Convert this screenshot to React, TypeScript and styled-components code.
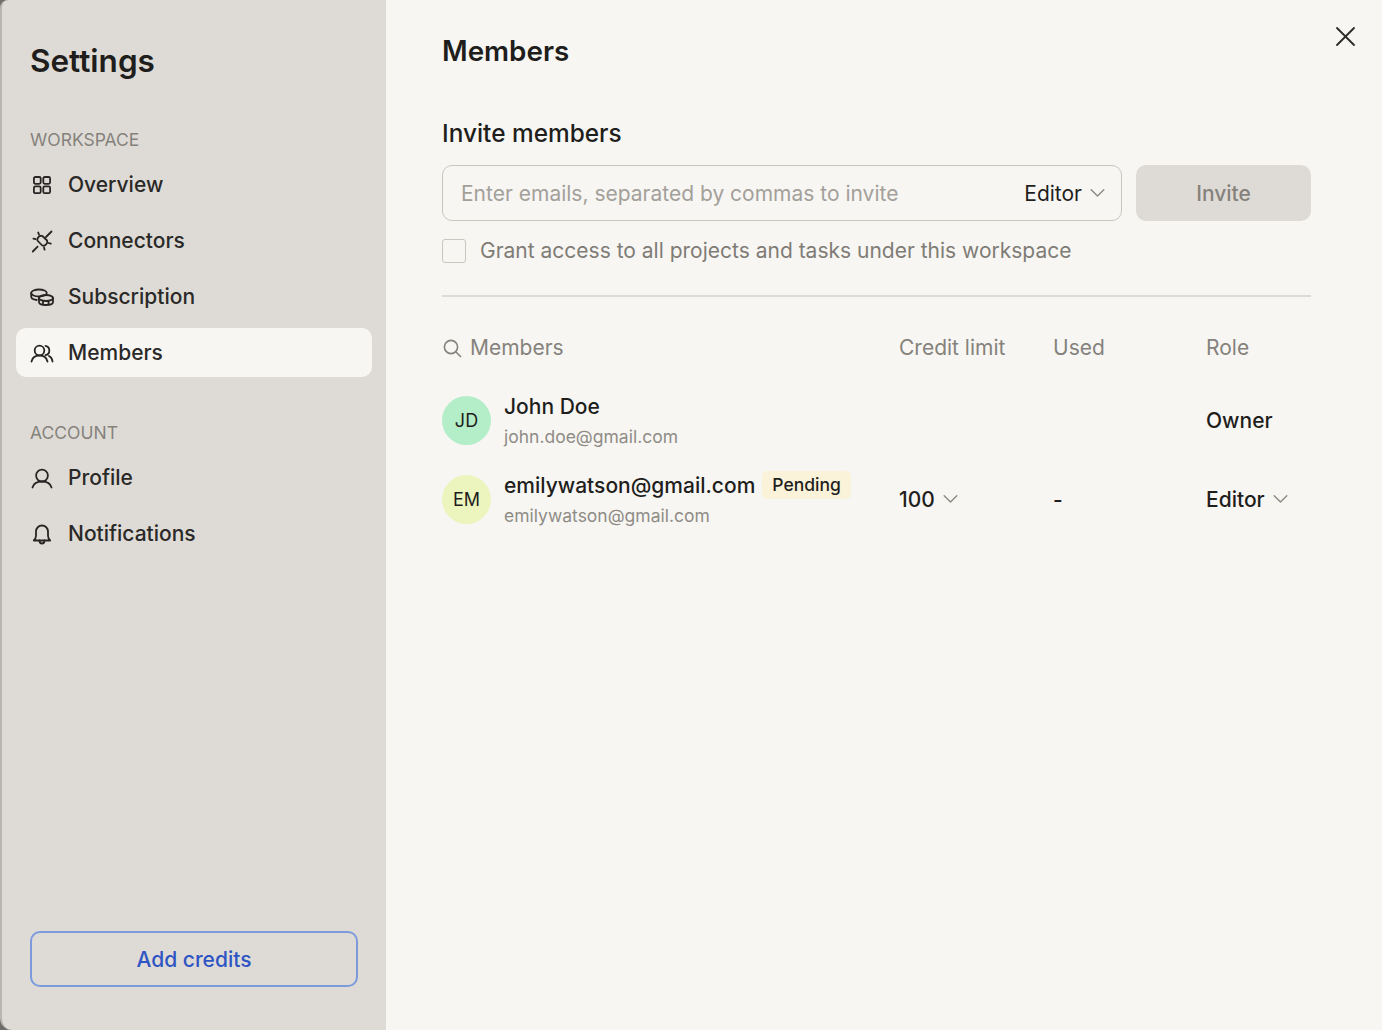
import React from "react";
import styled, { createGlobalStyle } from "styled-components";

const GlobalStyle = createGlobalStyle`
  html, body {
    margin: 0;
    padding: 0;
    background: #f7f6f3;
  }
  body {
    font-family: "Inter", "Liberation Sans", sans-serif;
    color: #1f1e1c;
  }
  * {
    box-sizing: border-box;
  }
`;

const Page = styled.div`
  display: flex;
  width: 1382px;
  height: 1030px;
  overflow: hidden;
  background: #6f6d69;
`;

const Sidebar = styled.aside`
  display: flex;
  flex-direction: column;
  width: 386px;
  height: 1030px;
  padding: 0 14px 43px 14px;
  background: #dedbd6;
  border-left: 2px solid #b9b6b1;
  border-radius: 8px 0 0 12px;
`;

const SidebarTitle = styled.h1`
  margin: 42px 0 0 14px;
  font-size: 31.5px;
  line-height: 38px;
  font-weight: 600;
  color: #1f1e1c;
`;

const SectionLabel = styled.div<{ $top: number }>`
  margin: ${(p) => p.$top}px 0 0 14px;
  font-size: 17.5px;
  line-height: 22px;
  color: #85827c;
`;

const NavList = styled.nav`
  display: flex;
  flex-direction: column;
  gap: 7px;
  margin-top: 9px;
`;

const NavItem = styled.a<{ $active?: boolean }>`
  display: flex;
  align-items: center;
  gap: 14px;
  height: 49px;
  padding: 0 14px;
  border-radius: 10px;
  font-size: 21px;
  font-weight: 500;
  color: #2a2927;
  background: ${(p) => (p.$active ? "#f7f6f3" : "transparent")};
  svg {
    flex: none;
    width: 24px;
    height: 24px;
    fill: none;
    stroke: #262523;
    stroke-width: 1.8;
    stroke-linecap: round;
    stroke-linejoin: round;
  }
`;

const AddCredits = styled.button`
  width: 328px;
  height: 56px;
  margin: auto 0 0 14px;
  border: 2px solid #7b9bdc;
  border-radius: 10px;
  background: transparent;
  font-family: inherit;
  font-size: 21px;
  font-weight: 500;
  color: #2f55c4;
`;

const Main = styled.main`
  position: relative;
  flex: 1;
  height: 1030px;
  padding: 33px 71px 0 56px;
  background: #f7f6f3;
`;

const CloseIcon = styled.svg`
  position: absolute;
  top: 26px;
  right: 26px;
  width: 21px;
  height: 21px;
  fill: none;
  stroke: #2a2927;
  stroke-width: 1.8;
  stroke-linecap: round;
`;

const PageTitle = styled.h2`
  margin: 0;
  font-size: 27.8px;
  line-height: 36px;
  font-weight: 600;
  color: #1f1e1c;
`;

const SectionTitle = styled.h3`
  margin: 47px 0 0;
  font-size: 24.4px;
  line-height: 34px;
  font-weight: 500;
  color: #1f1e1c;
`;

const InviteRow = styled.div`
  display: flex;
  gap: 14px;
  margin-top: 15px;
`;

const InviteField = styled.div`
  display: flex;
  align-items: center;
  justify-content: space-between;
  width: 680px;
  height: 56px;
  padding: 0 16px 0 18px;
  border: 1.5px solid #c9c6c0;
  border-radius: 10px;
`;

const Placeholder = styled.span`
  font-size: 21px;
  color: #a3a09a;
`;

const Selector = styled.span`
  display: inline-flex;
  align-items: center;
  gap: 8px;
  font-size: 21px;
  color: #1f1e1c;
`;

const Chevron = styled.svg`
  width: 15px;
  height: 10px;
  fill: none;
  stroke: #8f8c86;
  stroke-width: 1.5;
  stroke-linecap: round;
  stroke-linejoin: round;
`;

const InviteButton = styled.button`
  width: 175px;
  height: 56px;
  border: 0;
  border-radius: 10px;
  background: #dedbd6;
  font-family: inherit;
  font-size: 21px;
  font-weight: 500;
  color: #85827c;
`;

const GrantRow = styled.label`
  display: flex;
  align-items: center;
  gap: 14px;
  margin-top: 17px;
  font-size: 21px;
  line-height: 26px;
  color: #7f7c76;
`;

const Checkbox = styled.span`
  width: 24px;
  height: 24px;
  border: 1.5px solid #c9c6c0;
  border-radius: 3px;
`;

const Divider = styled.hr`
  height: 2px;
  margin: 31px 0 0;
  border: 0;
  background: #dedbd6;
`;

const columns = "457px 154px 153px 1fr";

const HeaderRow = styled.div`
  display: grid;
  grid-template-columns: ${columns};
  align-items: center;
  margin-top: 38px;
  font-size: 21px;
  line-height: 26px;
  color: #85827c;
`;

const SearchCell = styled.div`
  display: flex;
  align-items: center;
  gap: 8px;
  svg {
    width: 20px;
    height: 20px;
    fill: none;
    stroke: #85827c;
    stroke-width: 1.6;
    stroke-linecap: round;
  }
`;

const MemberRow = styled.div<{ $top: number }>`
  display: grid;
  grid-template-columns: ${columns};
  align-items: center;
  margin-top: ${(p) => p.$top}px;
  font-size: 21px;
  font-weight: 450;
  color: #1f1e1c;
`;

const MemberCell = styled.div`
  display: flex;
  align-items: center;
  gap: 13px;
`;

const Avatar = styled.div<{ $bg: string }>`
  display: flex;
  align-items: center;
  justify-content: center;
  flex: none;
  width: 49px;
  height: 49px;
  border-radius: 50%;
  background: ${(p) => p.$bg};
  font-size: 18px;
  font-weight: 400;
  color: #1f1e1c;
`;

const MemberText = styled.div`
  display: flex;
  flex-direction: column;
  gap: 4px;
`;

const NameLine = styled.div`
  display: flex;
  align-items: center;
  gap: 7px;
  height: 30px;
  font-size: 21px;
  font-weight: 450;
`;

const Email = styled.div`
  font-size: 17.5px;
  font-weight: 400;
  line-height: 24px;
  color: #8f8c86;
`;

const Badge = styled.span`
  padding: 2px 10px;
  border-radius: 5px;
  background: #faf3d9;
  font-size: 17.5px;
  line-height: 24px;
  color: #1f1e1c;
`;

const Icon = ({ children }: { children: React.ReactNode }) => (
  <svg viewBox="0 0 24 24">{children}</svg>
);

const Arrow = () => (
  <Chevron viewBox="0 0 15 10">
    <path d="M1.2 1.8 7.5 8l6.3-6.2" />
  </Chevron>
);

const workspaceItems = [
  {
    label: "Overview",
    icon: (
      <>
        <rect x="3.9" y="4" width="6.8" height="6.8" rx="1.5" />
        <rect x="13.3" y="4" width="6.8" height="6.8" rx="1.5" />
        <rect x="3.9" y="13.4" width="6.8" height="6.8" rx="1.5" />
        <rect x="13.3" y="13.4" width="6.8" height="6.8" rx="1.5" />
      </>
    ),
  },
  {
    label: "Connectors",
    icon: (
      <>
        <path d="M2.8 22.5 7.6 17.6M16 8 21.5 2.5" />
        <path d="M7.4 11.5 12.2 16.5a3.6 3.6 0 0 0 3.9-1.1 3.6 3.6 0 0 0 1-3.9L12.4 7a3.6 3.6 0 0 0-3.9 1 3.6 3.6 0 0 0-1.1 3.5Z" />
        <path d="M8.2 3.5 9 5.6M3.4 9.6l2.2.6M18.6 14l2.2.7M14 18.5l.6 2.2" />
      </>
    ),
  },
  {
    label: "Subscription",
    icon: (
      <>
        <ellipse cx="9" cy="8" rx="7.8" ry="3.5" />
        <path d="M1.2 8v3.6c0 1.8 2.4 3.1 5.6 3.4" />
        <ellipse cx="16" cy="13" rx="7" ry="3" />
        <path d="M9 13v4c0 1.7 3.1 3 7 3s7-1.3 7-3v-4M13 15.8v4M18.5 15.8v4" />
      </>
    ),
  },
  {
    label: "Members",
    active: true,
    icon: (
      <>
        <circle cx="9.5" cy="9.5" r="4.8" />
        <path d="M1.5 20.5c.8-3.6 4-6 8-6s7.2 2.4 8 6" />
        <path d="M15.5 4.8a4.8 4.8 0 0 1 0 9.4M19 15c2 .9 3.2 3 3.5 5.5" />
      </>
    ),
  },
];

const accountItems = [
  {
    label: "Profile",
    icon: (
      <>
        <circle cx="12" cy="9.6" r="5.9" />
        <path d="M2.5 21.5c1.2-4.4 5-6 9.5-6s8.3 1.6 9.5 6" />
      </>
    ),
  },
  {
    label: "Notifications",
    icon: (
      <>
        <path d="M3.8 18.5c1.2-1 2.2-2.4 2.2-5V9.5a6 6 0 0 1 12 0v4c0 2.6 1 4 2.2 5Z" />
        <path d="M9.5 18.5c0 1.8 1.1 3 2.5 3s2.5-1.2 2.5-3" />
      </>
    ),
  },
];

function App() {
  return (
    <Page>
      <GlobalStyle />
      <Sidebar>
        <SidebarTitle>Settings</SidebarTitle>
        <SectionLabel $top={49}>WORKSPACE</SectionLabel>
        <NavList>
          {workspaceItems.map((item) => (
            <NavItem key={item.label} $active={item.active}>
              <Icon>{item.icon}</Icon>
              {item.label}
            </NavItem>
          ))}
        </NavList>
        <SectionLabel $top={45}>ACCOUNT</SectionLabel>
        <NavList>
          {accountItems.map((item) => (
            <NavItem key={item.label}>
              <Icon>{item.icon}</Icon>
              {item.label}
            </NavItem>
          ))}
        </NavList>
        <AddCredits>Add credits</AddCredits>
      </Sidebar>
      <Main>
        <CloseIcon viewBox="0 0 21 21">
          <path d="M2 2l17 17M19 2 2 19" />
        </CloseIcon>
        <PageTitle>Members</PageTitle>
        <SectionTitle>Invite members</SectionTitle>
        <InviteRow>
          <InviteField>
            <Placeholder>Enter emails, separated by commas to invite</Placeholder>
            <Selector>
              Editor
              <Arrow />
            </Selector>
          </InviteField>
          <InviteButton>Invite</InviteButton>
        </InviteRow>
        <GrantRow>
          <Checkbox />
          Grant access to all projects and tasks under this workspace
        </GrantRow>
        <Divider />
        <HeaderRow>
          <SearchCell>
            <svg viewBox="0 0 20 20">
              <circle cx="9" cy="9" r="6.6" />
              <path d="m14 14 4.5 4.5" />
            </svg>
            Members
          </SearchCell>
          <div>Credit limit</div>
          <div>Used</div>
          <div>Role</div>
        </HeaderRow>
        <MemberRow $top={30}>
          <MemberCell>
            <Avatar $bg="#b3eec8">JD</Avatar>
            <MemberText>
              <NameLine>John Doe</NameLine>
              <Email>john.doe@gmail.com</Email>
            </MemberText>
          </MemberCell>
          <div />
          <div />
          <div>Owner</div>
        </MemberRow>
        <MemberRow $top={21}>
          <MemberCell>
            <Avatar $bg="#ebf5bd">EM</Avatar>
            <MemberText>
              <NameLine>
                emilywatson@gmail.com
                <Badge>Pending</Badge>
              </NameLine>
              <Email>emilywatson@gmail.com</Email>
            </MemberText>
          </MemberCell>
          <Selector>
            100
            <Arrow />
          </Selector>
          <div>-</div>
          <Selector>
            Editor
            <Arrow />
          </Selector>
        </MemberRow>
      </Main>
    </Page>
  );
}

export default App;
